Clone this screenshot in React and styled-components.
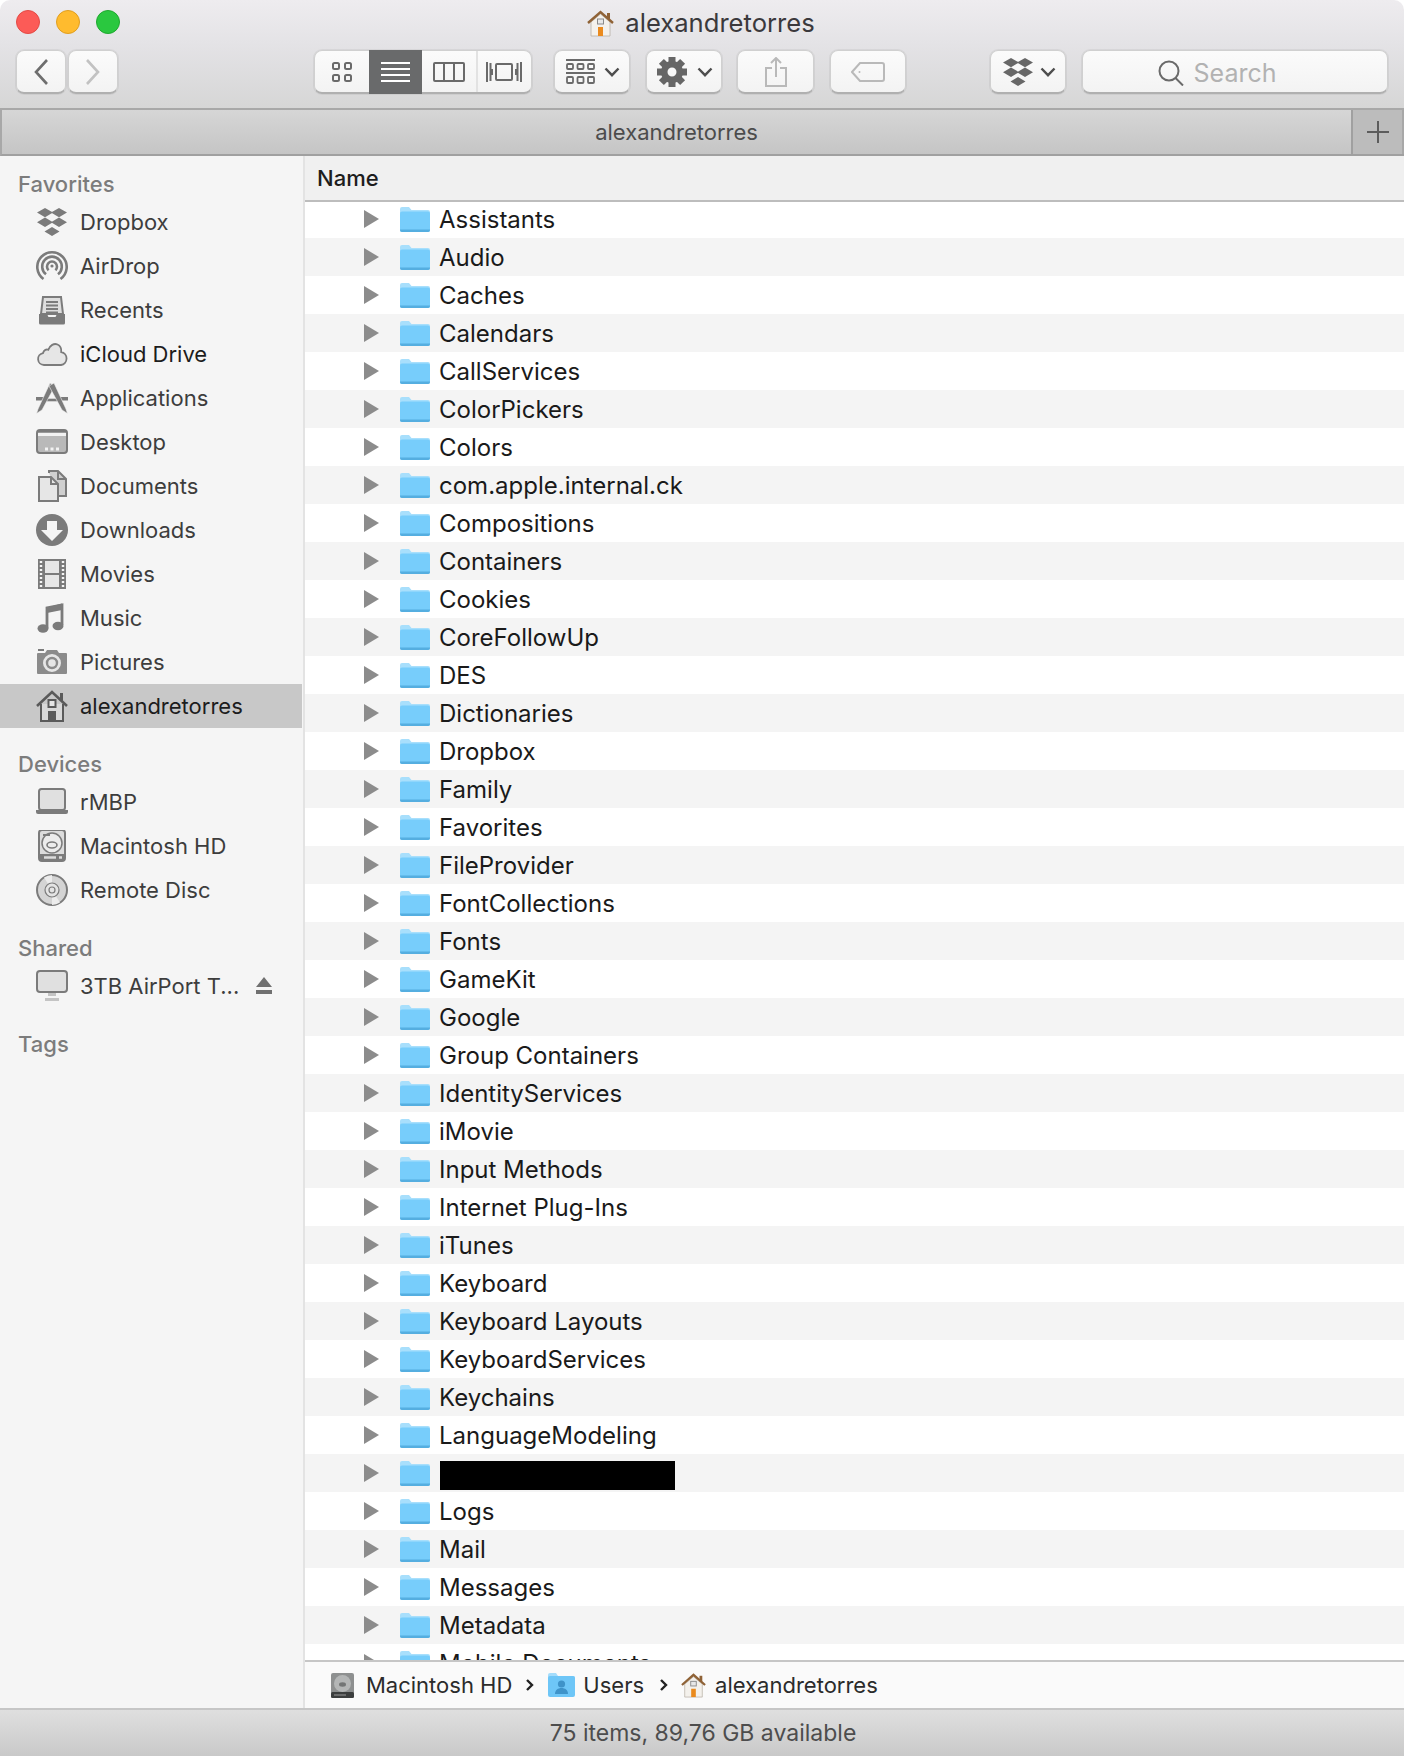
import React from 'react';
import styled, { createGlobalStyle } from 'styled-components';

const GlobalStyle = createGlobalStyle`
  html, body { margin: 0; padding: 0; background: #fff; }
  body { font-family: Inter, "Liberation Sans", sans-serif; }
  * { box-sizing: border-box; }
`;

const Window = styled.div`
  width: 1404px;
  height: 1756px;
  display: flex;
  flex-direction: column;
  overflow: hidden;
  border-radius: 10px 10px 0 0;
  background: #fff;
`;
const TitleBar = styled.div`
  height: 108px;
  flex: none;
  background: linear-gradient(#eeecef, #e4e3e6 40%, #d6d6d6);
  display: flex;
  flex-direction: column;
`;
const TitleRow = styled.div`
  position: relative;
  height: 50px;
  display: flex;
  align-items: flex-start;
  justify-content: center;
  padding-top: 9px;
  padding-right: 2px;
`;
const Lights = styled.div`
  position: absolute;
  left: 16px;
  top: 10px;
  display: flex;
  gap: 16px;
`;
const Light = styled.span`
  width: 24px;
  height: 24px;
  border-radius: 50%;
  background: ${p => p.$color};
  border: 1px solid ${p => p.$edge};
`;
const TitleText = styled.div`
  display: flex;
  align-items: center;
  gap: 11px;
  font-size: 25.6px;
  line-height: 28px;
  color: #3b393c;
`;
const Toolbar = styled.div`
  display: flex;
  height: 44px;
  padding: 0 16px;
`;
const Button = styled.div`
  width: ${p => p.$w || 76}px;
  height: 44px;
  margin-left: ${p => p.$ml || 0}px;
  padding-left: ${p => p.$pl || 0}px;
  display: flex;
  align-items: center;
  justify-content: center;
  gap: ${p => p.$gap || 0}px;
  background: linear-gradient(#fbfbfb, #f3f3f3);
  border: 1px solid #d0d0d0;
  border-bottom: 2px solid #b0b0b0;
  border-radius: 8px;
  box-shadow: 0 0 0 1px rgba(0, 0, 0, 0.05);
`;
const Segments = styled.div`
  width: 218px;
  height: 44px;
  margin-left: 196px;
  display: flex;
  background: linear-gradient(#fbfbfb, #f3f3f3);
  border: 1px solid #d0d0d0;
  border-bottom: 2px solid #b0b0b0;
  border-radius: 8px;
  box-shadow: 0 0 0 1px rgba(0, 0, 0, 0.05);
`;
const Segment = styled.div`
  flex: 1;
  display: flex;
  align-items: center;
  justify-content: center;
  margin: ${p => (p.$on ? '-1px 0 -2px' : '0')};
  background: ${p => (p.$on ? '#696a6b' : 'none')};
  border-left: ${p => (p.$line ? '2px solid #e2e2e2' : 'none')};
`;
const SearchBox = styled(Button)`
  margin-left: 16px;
  padding: 2px 36px 0 0;
  gap: 10px;
  font-size: 25px;
  color: #b2b2b2;
`;
const TabBar = styled.div`
  height: 48px;
  flex: none;
  display: flex;
  background: linear-gradient(#d6d6d6, #c5c5c5);
  border-top: 2px solid #a8a8a8;
  border-bottom: 2px solid #a0a0a0;
  border-left: 2px solid #a8a8a8;
`;
const TabTitle = styled.div`
  flex: 1;
  text-align: center;
  font-size: 22px;
  line-height: 44px;
  color: #4c4c4c;
`;
const TabPlus = styled.div`
  width: 53px;
  display: flex;
  align-items: center;
  justify-content: center;
  background: #bcbcbc;
  border-left: 2px solid #a0a0a0;
  border-right: 2px solid #a8a8a8;
`;
const Main = styled.div`
  flex: 1;
  min-height: 0;
  display: flex;
`;
const Sidebar = styled.div`
  width: 305px;
  flex: none;
  padding: 12px 1px 0 0;
  background: #f5f5f5;
  border-right: 2px solid #e3e3e3;
`;
const Section = styled.div`
  margin-bottom: 20px;
`;
const SectionTitle = styled.div`
  height: 32px;
  padding-left: 18px;
  font-size: 22px;
  font-weight: 500;
  line-height: 32px;
  color: #7c7c7c;
`;
const SideItem = styled.div`
  height: 44px;
  display: flex;
  align-items: center;
  padding-left: 36px;
  font-size: 22px;
  color: ${p => (p.$dark ? '#1d1d1d' : '#3d3d3d')};
  background: ${p => (p.$on ? '#c8c8c8' : 'none')};
`;
const SideIcon = styled.span`
  width: 32px;
  height: 32px;
  margin-right: 12px;
  flex: none;
  display: flex;
  align-items: center;
  justify-content: center;
  color: ${p => (p.$on ? '#5a5a5a' : '#7b7b7b')};
`;
const Eject = styled.span`
  margin-left: 17px;
  display: flex;
`;
const Content = styled.div`
  flex: 1;
  min-width: 0;
  display: flex;
  flex-direction: column;
`;
const ColumnHeader = styled.div`
  position: relative;
  height: 44px;
  flex: none;
  padding-left: 12px;
  font-size: 22px;
  font-weight: 500;
  line-height: 44px;
  color: #1d1d1d;
  background: #f0f0f0;
  box-shadow: 0 2px 0 #bdbdbd;
`;
const List = styled.div`
  flex: 1;
  min-height: 0;
  overflow: hidden;
`;
const Row = styled.div`
  height: 38px;
  display: flex;
  align-items: center;
  padding-left: 59px;
  font-size: 24px;
  color: #1a1a1a;
  background: ${p => (p.$alt ? '#f4f4f4' : '#fff')};
`;
const Disclosure = styled.span`
  width: 0;
  height: 0;
  margin-right: 21px;
  border-left: 15px solid #8c8c8c;
  border-top: 9px solid transparent;
  border-bottom: 9px solid transparent;
`;
const RowLabel = styled.span`
  margin-left: 9px;
`;
const Redacted = styled.span`
  width: 235px;
  height: 29px;
  margin: 4px 0 0 10px;
  background: #000;
`;
const PathBar = styled.div`
  height: 48px;
  flex: none;
  display: flex;
  align-items: center;
  padding-left: 25px;
  font-size: 22px;
  color: #2b2b2b;
  background: #fafafa;
  border-top: 2px solid #c6c6c6;
`;
const PathItem = styled.span`
  display: flex;
  align-items: center;
  gap: ${p => p.$gap}px;
`;
const PathSep = styled.span`
  display: flex;
  margin: 0 ${p => p.$right}px 0 ${p => p.$left}px;
`;
const StatusBar = styled.div`
  height: 48px;
  flex: none;
  padding-left: 2px;
  text-align: center;
  font-size: 23px;
  line-height: 46px;
  color: #4d4d4d;
  background: linear-gradient(#dfdfdf, #c9c9c9);
  border-top: 2px solid #c6c6c6;
`;

const Chevron = ({ color = '#4e4e4e' }) => (
  <svg width="16" height="10" viewBox="0 0 16 10" fill="none" stroke={color} strokeWidth="2.4">
    <path d="M1.5 1.5 8 8.2l6.5-6.7" />
  </svg>
);
const DropboxShape = ({ w = 32, h = 30, color = 'currentColor' }) => (
  <svg width={w} height={h} viewBox="0 0 32 30" fill={color}>
    <path d="M9 1l8 4.5-8 4.7-8-4.7zM23 1l8 4.5-8 4.7-8-4.7zM9 10.5l8 4.7-8 4.7-8-4.7zM23 10.5l8 4.7-8 4.7-8-4.7zM16 20l7.5 4.5L16 29l-7.5-4.5z" />
  </svg>
);
const Svg = ({ children }) => (
  <svg width="32" height="32" viewBox="0 0 32 32" fill="none" stroke="currentColor" strokeWidth="2">
    {children}
  </svg>
);
const AirDropIcon = () => (
  <Svg>
    <g strokeWidth="2.6">
      <path d="M7.5 29A14.7 14.7 0 1 1 24.5 29" />
      <path d="M10 24.2A9.8 9.8 0 1 1 22 24.2" />
      <path d="M12.6 20.2A5 5 0 1 1 19.4 20.2" />
    </g>
    <circle cx="16" cy="16" r="1.6" fill="currentColor" stroke="none" />
  </Svg>
);
const RecentsIcon = () => (
  <Svg>
    <path d="M7 3h18l2 17H5z" fill="#dedede" />
    <path d="M10 8h12M10 11.5h12M10 15h12M10 18.5h12" />
    <path d="M3 20h8l1.5 3h7l1.5-3h8v9a1.5 1.5 0 0 1-1.5 1.5h-23A1.5 1.5 0 0 1 3 29z" fill="currentColor" stroke="none" />
  </Svg>
);
const CloudIcon = () => (
  <Svg>
    <path d="M8 27a6 6 0 0 1-1-11.9C8 11.8 10.5 11 12.3 11.8 14 7.3 18 5 21.5 6.5c3 1.3 4 4.5 3.7 7.5A6.6 6.6 0 0 1 25 27z" fill="#e6e6e6" strokeWidth="1.8" />
  </Svg>
);
const AppsIcon = () => (
  <Svg>
    <path d="M0 15h8v3.5H0zM24 15h8v3.5h-8z" fill="currentColor" stroke="none" />
    <path d="M8 18h16" strokeWidth="2.6" />
    <path d="M14 1 2 27 .5 31.5 6 28 19 4z" fill="currentColor" stroke="#f5f5f5" strokeWidth="0.6" />
    <path d="M18 1 30 27l1.5 4.5L26 28 13 4z" fill="currentColor" stroke="#f5f5f5" strokeWidth="0.6" />
  </Svg>
);
const DesktopIcon = () => (
  <Svg>
    <rect x="1" y="4" width="30" height="23" rx="3" fill="#b9b9b9" />
    <path d="M2 8.5h28" stroke="#f2f2f2" strokeWidth="3" />
    <path d="M2 5.5h28" />
    <path d="M9 23h3M14.5 23h3M20 23h3" stroke="#f2f2f2" strokeWidth="3" />
  </Svg>
);
const DocumentsIcon = () => (
  <Svg>
    <path d="M13 3V1h9l8 8v17h-7" fill="#cfcfcf" />
    <path d="M22 1v8h8" />
    <path d="M3 7h12l7 7v17H3z" fill="#e6e6e6" />
    <path d="M15 7v7h7" />
  </Svg>
);
const DownloadsIcon = () => (
  <Svg>
    <circle cx="16" cy="16" r="16" fill="currentColor" stroke="none" />
    <path d="M11 7h10v9h6L16 27 5 16h6z" fill="#f5f5f5" stroke="none" />
  </Svg>
);
const MoviesIcon = () => (
  <Svg>
    <rect x="8" y="2" width="16" height="28" fill="#e6e6e6" />
    <path d="M8 16h16" />
    <path d="M2 1h6v30H2zM24 1h6v30h-6z" fill="currentColor" stroke="none" />
    <path d="M5 3v26M27 3v26" stroke="#f5f5f5" strokeWidth="2.4" strokeDasharray="2 2" />
  </Svg>
);
const MusicIcon = () => (
  <Svg>
    <path d="M11 26V6l15-3v20" strokeWidth="2.8" />
    <path d="M11 5.500 26 1.500V8L11 11z" fill="currentColor" stroke="none" />
    <ellipse cx="7" cy="26.5" rx="5.5" ry="4.2" fill="currentColor" stroke="none" />
    <ellipse cx="22" cy="24" rx="5.5" ry="4.2" fill="currentColor" stroke="none" />
  </Svg>
);
const PicturesIcon = () => (
  <Svg>
    <path d="M2 4h6" />
    <path d="M2 7h7l2-3h10l2 3h7a1 1 0 0 1 1 1v19a1 1 0 0 1-1 1H2a1 1 0 0 1-1-1V8a1 1 0 0 1 1-1z" fill="#8b8b8b" stroke="none" />
    <circle cx="16" cy="17" r="8" fill="#e6e6e6" stroke="#e6e6e6" />
    <circle cx="16" cy="17" r="5" fill="none" stroke="#8b8b8b" strokeWidth="2.4" />
  </Svg>
);
const HomeIcon = () => (
  <Svg>
    <path d="M1 16 16 2l15 14" strokeWidth="2.6" />
    <path d="M24 3h3v8h-3z" fill="currentColor" stroke="none" />
    <path d="M5 14v17h22V14" fill="#d8d8d8" />
    <rect x="12.5" y="10" width="7" height="7" fill="#e6e6e6" />
    <rect x="12" y="21" width="8" height="10" fill="currentColor" stroke="none" />
  </Svg>
);
const LaptopIcon = () => (
  <Svg>
    <rect x="3" y="3" width="26" height="21" rx="2.5" fill="#e0e0e0" />
    <path d="M0 24h32v2a2 2 0 0 1-2 2H2a2 2 0 0 1-2-2z" fill="currentColor" stroke="none" />
  </Svg>
);
const DriveIcon = () => (
  <Svg>
    <rect x="3" y="0" width="26" height="31" rx="3" fill="#dcdcdc" />
    <circle cx="16" cy="13" r="10" fill="#ececec" strokeWidth="1.5" />
    <ellipse cx="16" cy="15" rx="5" ry="3" strokeWidth="1.6" />
    <path d="M7 5h7" />
    <path d="M3 24h26v4a3 3 0 0 1-3 3H6a3 3 0 0 1-3-3z" fill="currentColor" stroke="none" />
    <path d="M8 27.5h12M23 27.5h3" stroke="#dcdcdc" strokeWidth="2.4" />
  </Svg>
);
const DiscIcon = () => (
  <Svg>
    <circle cx="16" cy="16" r="15" fill="#d4d4d4" />
    <path d="M16 16 8 3.500A15 15 0 0 1 16 1zM16 16 24 28.500A15 15 0 0 1 16 31z" fill="#ececec" stroke="none" />
    <circle cx="16" cy="16" r="7" fill="#e4e4e4" strokeWidth="1.2" />
    <circle cx="16" cy="16" r="3" strokeWidth="1.2" />
  </Svg>
);
const DisplayIcon = () => (
  <Svg>
    <rect x="1" y="1" width="30" height="21" rx="3" fill="#e0e0e0" />
    <path d="M12 23h8v3h-8zM9 28h14v3H9z" fill="#c4c4c4" stroke="none" />
  </Svg>
);
const EjectIcon = () => (
  <svg width="16" height="18" viewBox="0 0 16 18" fill="#707070">
    <path d="M8 0l8 10H0zM0 13h16v4H0z" />
  </svg>
);
const ColorHome = ({ size = 27 }) => (
  <svg width={size} height={size} viewBox="0 0 27 27">
    <path d="M4 12v14h19V12L13.5 4z" fill="#f4f1ec" stroke="#b8b0a6" strokeWidth="0.8" />
    <path d="M1 13 13.5 2 26 13" fill="none" stroke="#8f6236" strokeWidth="2.4" />
    <rect x="20" y="3" width="3" height="6" fill="#8f6236" />
    <rect x="10.5" y="9" width="6" height="5" fill="#e8e8e8" stroke="#8a8a8a" />
    <rect x="11" y="17" width="5" height="9" fill="#ea8a1e" />
  </svg>
);
const ColorDrive = () => (
  <svg width="25" height="25" viewBox="0 0 25 25">
    <rect x="1" y="0" width="23" height="25" rx="2" fill="#8e9090" />
    <circle cx="12.5" cy="10.5" r="8.5" fill="#b4b6b6" />
    <ellipse cx="12.5" cy="11.5" rx="3.5" ry="2.2" fill="#737575" />
    <rect x="1" y="19" width="23" height="6" rx="1.5" fill="#3c3e3e" />
    <path d="M4 22h12" stroke="#9a9a9a" />
  </svg>
);
const UsersFolder = () => (
  <svg width="27" height="24" viewBox="0 0 27 24">
    <path d="M0 5V2a2 2 0 0 1 2-2h6l2 3h15a2 2 0 0 1 2 2z" fill="#a4dcfb" />
    <rect x="0" y="3" width="27" height="21" rx="2" fill="#6ec6f7" />
    <circle cx="13.5" cy="11" r="3.6" fill="#3f93c9" />
    <path d="M7 21c0-4 3-6 6.5-6s6.5 2 6.500 6z" fill="#3f93c9" />
  </svg>
);
const Folder = () => (
  <svg width="30" height="25" viewBox="0 0 30 25">
    <path d="M0 6V2a2 2 0 0 1 2-2h7l2.5 3H28a2 2 0 0 1 2 2v2z" fill="#a8dffc" />
    <path d="M0 6.5a2 2 0 0 1 2-2h26a2 2 0 0 1 2 2V23a2 2 0 0 1-2 2H2a2 2 0 0 1-2-2z" fill="#77cdfb" />
    <path d="M0 23a2 2 0 0 0 2 2h26a2 2 0 0 0 2-2v-.5H0z" fill="#55aee0" />
  </svg>
);
const PathArrow = () => (
  <svg width="10" height="14" viewBox="0 0 10 14" fill="none" stroke="#222" strokeWidth="2.4">
    <path d="M2 2l5 5-5 5" />
  </svg>
);
const Back = ({ color }) => (
  <svg width="16" height="28" viewBox="0 0 16 28" fill="none" stroke={color} strokeWidth="2.6">
    <path d="M14 2 3 14l11 12" />
  </svg>
);
const Forward = ({ color }) => (
  <svg width="16" height="28" viewBox="0 0 16 28" fill="none" stroke={color} strokeWidth="2.6">
    <path d="M2 2l11 12L2 26" />
  </svg>
);
const GridIcon = () => (
  <svg width="20" height="20" viewBox="0 0 20 20" fill="none" stroke="#6a6a6a" strokeWidth="2">
    <rect x="1" y="1" width="6" height="6" rx="1.5" />
    <rect x="13" y="1" width="6" height="6" rx="1.5" />
    <rect x="1" y="13" width="6" height="6" rx="1.5" />
    <rect x="13" y="13" width="6" height="6" rx="1.5" />
  </svg>
);
const ListIcon = () => (
  <svg width="29" height="20" viewBox="0 0 29 20" stroke="#fff" strokeWidth="2">
    <path d="M0 1h29M0 7h29M0 13h29M0 19h29" />
  </svg>
);
const ColumnsIcon = () => (
  <svg width="32" height="20" viewBox="0 0 32 20" fill="none" stroke="#6a6a6a" strokeWidth="2">
    <rect x="1" y="1" width="30" height="18" rx="1" />
    <path d="M11 1v18M21 1v18" />
  </svg>
);
const CoverIcon = () => (
  <svg width="36" height="22" viewBox="0 0 36 22" fill="none" stroke="#6a6a6a" strokeWidth="2">
    <rect x="10" y="3" width="16" height="16" rx="1" />
    <path d="M1 1v20M4.5 2v18M35 1v20M31.5 2v18" />
    <path d="M6 8v6M30 8v6" />
  </svg>
);
const ArrangeIcon = () => (
  <svg width="29" height="26" viewBox="0 0 29 26" fill="none" stroke="#6a6a6a" strokeWidth="1.8">
    <path d="M0 1h29M0 14h29" />
    <rect x="1" y="5" width="6" height="5" rx="1" />
    <rect x="11.5" y="5" width="6" height="5" rx="1" />
    <rect x="22" y="5" width="6" height="5" rx="1" />
    <rect x="1" y="18" width="6" height="6" rx="1" />
    <rect x="11.5" y="18" width="6" height="6" rx="1" />
    <rect x="22" y="18" width="6" height="6" rx="1" />
  </svg>
);
const GearIcon = () => (
  <svg width="30" height="30" viewBox="0 0 30 30" fill="#666">
    <g transform="translate(15 15)">
      {[0, 45, 90, 135, 180, 225, 270, 315].map(a => (
        <rect key={a} x="-3.5" y="-15" width="7" height="8" transform={`rotate(${a})`} />
      ))}
    </g>
    <path fillRule="evenodd" d="M15 4a11 11 0 1 1 0 22 11 11 0 0 1 0-22zm0 6.5a4.5 4.5 0 1 0 0 9 4.5 4.5 0 0 0 0-9z" />
  </svg>
);
const ShareIcon = () => (
  <svg width="22" height="30" viewBox="0 0 22 30" fill="none" stroke="#b9b9b9" strokeWidth="2">
    <path d="M7 11H1v18h20V11h-6" />
    <path d="M11 20V1M6 6l5-5 5 5" />
  </svg>
);
const TagIcon = () => (
  <svg width="34" height="20" viewBox="0 0 34 20" fill="none" stroke="#b9b9b9" strokeWidth="2">
    <path d="M9 1h22a2 2 0 0 1 2 2v14a2 2 0 0 1-2 2H9L1 10z" />
    <circle cx="8.5" cy="10" r="1" fill="#b9b9b9" stroke="none" />
  </svg>
);
const SearchIcon = () => (
  <svg width="26" height="26" viewBox="0 0 26 26" fill="none" stroke="#6a6a6a" strokeWidth="2">
    <circle cx="11" cy="11" r="9.5" />
    <path d="M17.5 18 25 25.5" />
  </svg>
);
const PlusIcon = () => (
  <svg width="22" height="22" viewBox="0 0 22 22" stroke="#5c5c5c" strokeWidth="2">
    <path d="M11 0v22M0 11h22" />
  </svg>
);

const sections = [
  {
    title: 'Favorites',
    items: [
      { name: 'Dropbox', icon: <DropboxShape /> },
      { name: 'AirDrop', icon: <AirDropIcon /> },
      { name: 'Recents', icon: <RecentsIcon /> },
      { name: 'iCloud Drive', icon: <CloudIcon />, dark: true },
      { name: 'Applications', icon: <AppsIcon /> },
      { name: 'Desktop', icon: <DesktopIcon /> },
      { name: 'Documents', icon: <DocumentsIcon /> },
      { name: 'Downloads', icon: <DownloadsIcon /> },
      { name: 'Movies', icon: <MoviesIcon /> },
      { name: 'Music', icon: <MusicIcon /> },
      { name: 'Pictures', icon: <PicturesIcon /> },
      { name: 'alexandretorres', icon: <HomeIcon />, on: true, dark: true },
    ],
  },
  {
    title: 'Devices',
    items: [
      { name: 'rMBP', icon: <LaptopIcon /> },
      { name: 'Macintosh HD', icon: <DriveIcon /> },
      { name: 'Remote Disc', icon: <DiscIcon /> },
    ],
  },
  {
    title: 'Shared',
    items: [{ name: '3TB AirPort T...', icon: <DisplayIcon />, eject: true }],
  },
  { title: 'Tags', items: [] },
];

const folders = [
  'Assistants', 'Audio', 'Caches', 'Calendars', 'CallServices', 'ColorPickers', 'Colors',
  'com.apple.internal.ck', 'Compositions', 'Containers', 'Cookies', 'CoreFollowUp', 'DES',
  'Dictionaries', 'Dropbox', 'Family', 'Favorites', 'FileProvider', 'FontCollections', 'Fonts',
  'GameKit', 'Google', 'Group Containers', 'IdentityServices', 'iMovie', 'Input Methods',
  'Internet Plug-Ins', 'iTunes', 'Keyboard', 'Keyboard Layouts', 'KeyboardServices', 'Keychains',
  'LanguageModeling', null, 'Logs', 'Mail', 'Messages', 'Metadata', 'Mobile Documents',
];

const App = () => (
  <Window>
    <GlobalStyle />
    <TitleBar>
      <TitleRow>
        <Lights>
          <Light $color="#fc5b57" $edge="#e34a45" />
          <Light $color="#ffbb2e" $edge="#e09e1f" />
          <Light $color="#2ac83f" $edge="#1fa82f" />
        </Lights>
        <TitleText>
          <ColorHome />
          alexandretorres
        </TitleText>
      </TitleRow>
      <Toolbar>
        <Button $w={50}><Back color="#6e6e6e" /></Button>
        <Button $w={50} $ml={2}><Forward color="#c2c2c2" /></Button>
        <Segments>
          <Segment><GridIcon /></Segment>
          <Segment $on><ListIcon /></Segment>
          <Segment><ColumnsIcon /></Segment>
          <Segment $line><CoverIcon /></Segment>
        </Segments>
        <Button $ml={22} $gap={9} $pl={2}><ArrangeIcon /><Chevron /></Button>
        <Button $ml={16} $gap={10} $pl={2}><GearIcon /><Chevron /></Button>
        <Button $ml={15} $w={77}><ShareIcon /></Button>
        <Button $ml={16}><TagIcon /></Button>
        <Button $ml={84} $gap={6} $pl={2}><DropboxShape color="#676767" /><Chevron /></Button>
        <SearchBox $w={306}><SearchIcon />Search</SearchBox>
      </Toolbar>
    </TitleBar>
    <TabBar>
      <TabTitle>alexandretorres</TabTitle>
      <TabPlus><PlusIcon /></TabPlus>
    </TabBar>
    <Main>
      <Sidebar>
        {sections.map(s => (
          <Section key={s.title}>
            <SectionTitle>{s.title}</SectionTitle>
            {s.items.map(i => (
              <SideItem key={i.name} $on={i.on} $dark={i.dark}>
                <SideIcon $on={i.on}>{i.icon}</SideIcon>
                {i.name}
                {i.eject && <Eject><EjectIcon /></Eject>}
              </SideItem>
            ))}
          </Section>
        ))}
      </Sidebar>
      <Content>
        <ColumnHeader>Name</ColumnHeader>
        <List>
          {folders.map((name, n) => (
            <Row key={n} $alt={n % 2 === 1}>
              <Disclosure />
              <Folder />
              {name ? <RowLabel>{name}</RowLabel> : <Redacted />}
            </Row>
          ))}
        </List>
        <PathBar>
          <PathItem $gap={11}><ColorDrive />Macintosh HD</PathItem>
          <PathSep $left={13} $right={13}><PathArrow /></PathSep>
          <PathItem $gap={8}><UsersFolder />Users</PathItem>
          <PathSep $left={15} $right={12}><PathArrow /></PathSep>
          <PathItem $gap={9}><ColorHome size={25} />alexandretorres</PathItem>
        </PathBar>
      </Content>
    </Main>
    <StatusBar>75 items, 89,76 GB available</StatusBar>
  </Window>
);

export default App;
